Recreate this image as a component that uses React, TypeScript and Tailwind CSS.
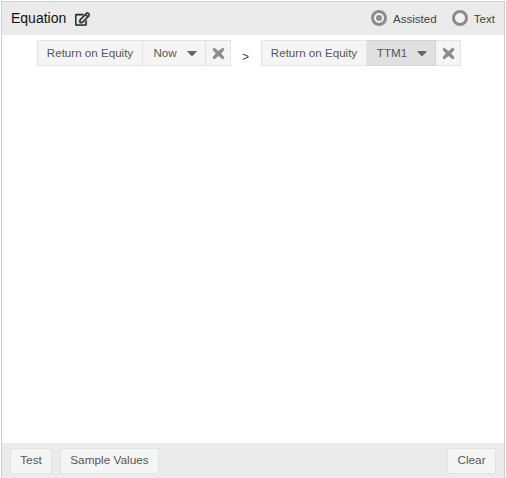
import React from 'react';
import { FaRegEdit, FaCaretDown } from 'react-icons/fa';

const FONT = "font-['Helvetica_Neue','Liberation_Sans',Arial,sans-serif]";

const Radio = ({ label, checked }: { label: string; checked?: boolean }) => (
  <span className="flex items-center gap-[6px]">
    <span className="flex h-[16px] w-[16px] items-center justify-center rounded-full border-[3px] border-[#8c8c8c] bg-[#f2f2f2]">
      {checked && <span className="h-[6px] w-[6px] rounded-full bg-[#8c8c8c]" />}
    </span>
    <span className="text-[11.6px] text-[#444]">{label}</span>
  </span>
);

// chunky cross, the plain icon packs draw it too thin
const Cross = () => (
  <svg viewBox="0 0 13 13" className="h-[13px] w-[13px] text-[#8c8c8c]">
    <path
      d="M2.2 0.6 6.5 4 10.8 0.6 12.6 2.4 9.2 6.5 12.6 10.6 10.8 12.4 6.5 9 2.2 12.4 0.4 10.6 3.8 6.5 0.4 2.4Z"
      fill="currentColor"
    />
  </svg>
);

const Operand = ({ unit, open }: { unit: string; open?: boolean }) => (
  <div className="flex h-[26px] text-[11.6px] text-[#555]">
    <div className="flex w-[106px] items-center justify-center border border-[#e3e3e3] bg-[#f5f5f5] pb-px">
      Return on Equity
    </div>
    <div
      className={`flex items-center justify-center gap-[9px] border-y border-r pl-[3px] pb-px ${
        open ? 'w-[69px] border-[#d5d5d5] bg-[#e0e0e0]' : 'w-[63px] border-[#e3e3e3] bg-[#f5f5f5]'
      }`}
    >
      <span>{unit}</span>
      <FaCaretDown className="h-[16px] w-[12px] text-[#666]" />
    </div>
    <div className="flex w-[25px] items-center justify-center border-y border-r border-[#e3e3e3] bg-[#f5f5f5]">
      <Cross />
    </div>
  </div>
);

const FooterButton = ({ children, width }: { children: React.ReactNode; width: string }) => (
  <button
    className={`flex h-[26px] items-center justify-center rounded-[2px] border border-[#e3e3e3] bg-[#f5f5f5] pt-px text-[11.8px] text-[#555] ${width}`}
  >
    {children}
  </button>
);

export default function App() {
  return (
    <div className={`h-[478px] w-[506px] bg-white pl-px pr-[1px] pt-px ${FONT}`}>
      <div className="flex h-full flex-col border-x border-t border-[#cfcfcf]">
        <div className="flex h-[33px] shrink-0 items-center justify-between bg-[#ebebeb] pl-[9px] pr-[9px]">
          <div className="flex items-center gap-[9px]">
            <span className="text-[14px] text-[#111]">Equation</span>
            <FaRegEdit className="h-[14px] w-[15px] stroke-current stroke-[24] text-[#333]" />
          </div>
          <div className="flex items-center gap-[15px]">
            <Radio label="Assisted" checked />
            <Radio label="Text" />
          </div>
        </div>

        <div className="flex flex-1 items-start pl-[35px] pt-[5px]">
          <Operand unit="Now" />
          <span className="mx-[11px] mt-[8px] w-[8px] text-[12px] text-[#444]">&gt;</span>
          <Operand unit="TTM1" open />
        </div>

        <div className="flex h-[35px] shrink-0 items-center justify-between bg-[#ebebeb] px-[8px]">
          <div className="flex gap-[8px]">
            <FooterButton width="w-[42px]">Test</FooterButton>
            <FooterButton width="w-[99px]">Sample Values</FooterButton>
          </div>
          <FooterButton width="w-[49px]">Clear</FooterButton>
        </div>
      </div>
    </div>
  );
}
